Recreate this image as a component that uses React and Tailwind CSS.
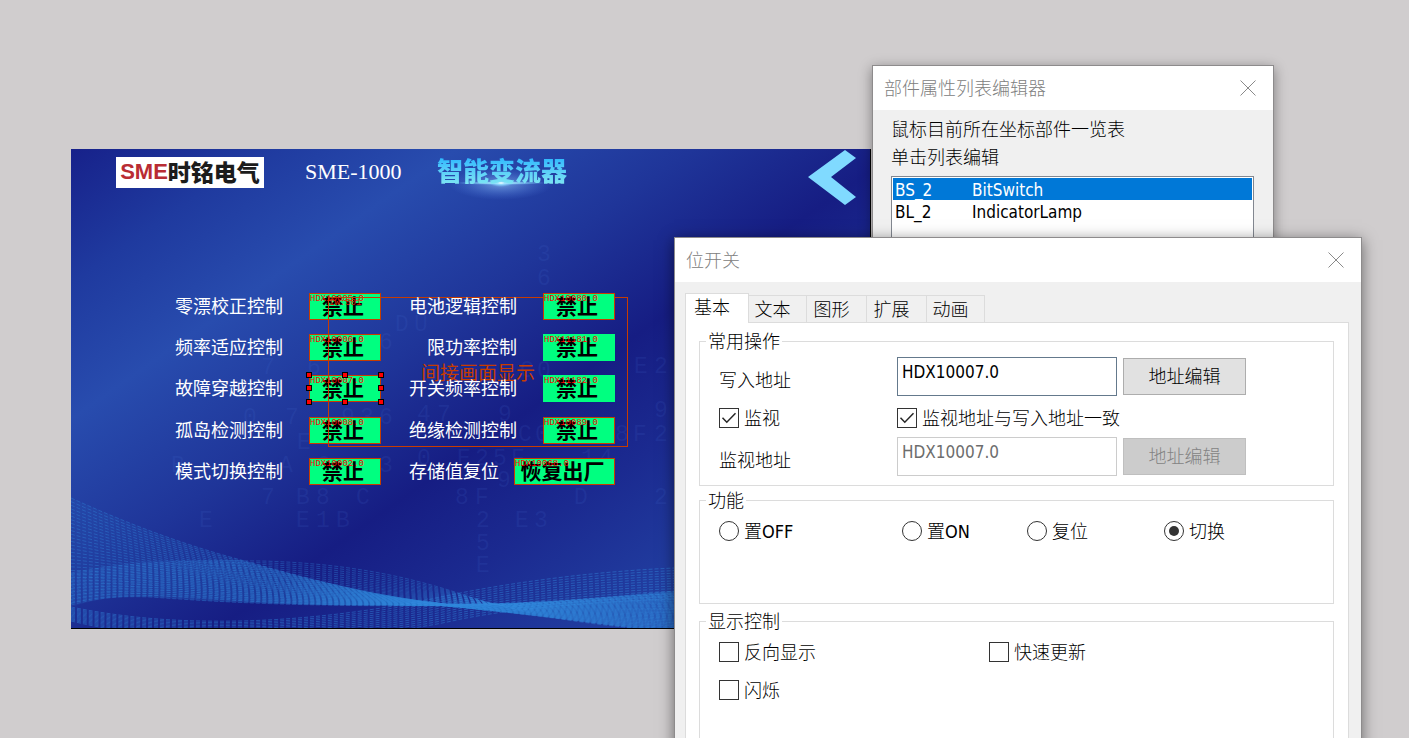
import React from 'react';

const CJK = "font-['DejaVu_Sans_Condensed','Noto_Sans_CJK_SC',sans-serif]";

/* ---------- background artwork of the HMI screen ---------- */

const mix = (a, b, t) => a.map((v, i) => v + (b[i] - v) * t);

// Each curve: start point followed by cubic control triples.
const BANDS = [
  {
    n: 30,
    color: '#2f82d8',
    top: [0, 349, 55, 374, 110, 395, 170, 411, 230, 428, 270, 438, 310, 446, 340, 451, 355, 453, 376, 455, 440, 456, 520, 450, 604, 442, 680, 434, 740, 430, 800, 428],
    bottom: [0, 454, 40, 444, 100, 446, 150, 450, 210, 455, 260, 456, 310, 456, 340, 456, 355, 456, 376, 457, 440, 463, 520, 474, 604, 484, 680, 490, 740, 490, 800, 488],
    opacity: 0.42,
  },
  {
    n: 24,
    color: '#3388dc',
    top: [0, 424, 50, 414, 110, 411, 190, 412, 270, 414, 330, 426, 384, 443, 440, 462, 500, 476, 604, 482, 680, 486, 740, 488, 800, 490],
    bottom: [0, 456, 30, 448, 50, 447, 80, 448, 160, 454, 230, 457, 370, 457, 450, 456, 540, 450, 604, 444, 680, 438, 740, 434, 800, 430],
    opacity: 0.36,
  },
  {
    n: 13,
    color: '#3590e2',
    top: [0, 458, 60, 470, 110, 473, 170, 472, 250, 470, 320, 459, 384, 445, 450, 432, 530, 422, 604, 419, 680, 418, 740, 420, 800, 424],
    bottom: [0, 472, 60, 486, 110, 490, 170, 490, 250, 490, 330, 484, 390, 470, 450, 458, 540, 452, 604, 450, 680, 450, 740, 454, 800, 458],
    opacity: 0.42,
  },
];

const toPath = (p) => {
  const r = p.map((v) => v.toFixed(1));
  let d = `M${r[0]} ${r[1]}`;
  for (let i = 2; i < r.length; i += 6) d += ` C${r.slice(i, i + 6).join(' ')}`;
  return d;
};

const GLYPHS = [
  ['0', 172, 275], ['7', 214, 275], ['9', 270, 275], ['3', 289, 275], ['6', 308, 275],
  ['E', 226, 300], ['B', 100, 323], ['A', 208, 323], ['2', 246, 323], ['3', 308, 323],
  ['6', 308, 200], ['6', 236, 225], ['7', 190, 225], ['D', 324, 182], ['U', 343, 182],
  ['7', 190, 355], ['B', 225, 355], ['8', 245, 355], ['C', 285, 355], ['8', 384, 355], ['F', 404, 355],
  ['E', 128, 378], ['E', 225, 378], ['1', 245, 378], ['B', 265, 378], ['2', 405, 378], ['E', 444, 378], ['3', 463, 378],
  ['5', 405, 401], ['E', 405, 423], ['D', 503, 355], ['2', 583, 355],
  ['C', 449, 228], ['0', 466, 228], ['E', 563, 224], ['2', 583, 224], ['4', 346, 272], ['7', 366, 272], ['9', 427, 272], ['9', 583, 268],
  ['C', 447, 292], ['0', 464, 292], ['8', 544, 292], ['F', 562, 292], ['2', 583, 292],
  ['0', 346, 316], ['E', 386, 316], ['2', 404, 316], ['5', 422, 316], ['F', 440, 316], ['1', 510, 316], ['4', 528, 316],
  ['9', 426, 338], ['3', 466, 112], ['6', 466, 136],
];

function ScreenArt() {
  return (
    <svg className="absolute inset-0 h-full w-full" viewBox="0 0 799 479" aria-hidden="true">
      <defs>
        <radialGradient id="glow">
          <stop offset="0" stopColor="#9fd4ff" stopOpacity="0.6" />
          <stop offset="1" stopColor="#5b8cf0" stopOpacity="0" />
        </radialGradient>
        <radialGradient id="flare">
          <stop offset="0" stopColor="#ffffff" />
          <stop offset="0.3" stopColor="#9fe4ff" stopOpacity="0.9" />
          <stop offset="1" stopColor="#6fc8ff" stopOpacity="0" />
        </radialGradient>
        <linearGradient id="ribbon" gradientUnits="userSpaceOnUse" x1="0" y1="0" x2="610" y2="0">
          <stop offset="0" stopColor="#2f86dc" stopOpacity="0.1" />
          <stop offset="0.35" stopColor="#2f90e0" stopOpacity="0.28" />
          <stop offset="0.62" stopColor="#28a4ea" stopOpacity="0.75" />
          <stop offset="0.8" stopColor="#2f9be6" stopOpacity="0.45" />
          <stop offset="1" stopColor="#2f8ee0" stopOpacity="0.3" />
        </linearGradient>
      </defs>
      <g fill="#4a74d8" fillOpacity="0.13" fontFamily="Liberation Mono, monospace" fontSize="23">
        {GLYPHS.map(([c, x, y]) => (
          <text key={`${x}-${y}`} x={x} y={y}>{c}</text>
        ))}
      </g>
      <path
        d="M0 426 C60 408 110 411 170 411 C250 434 310 447 376 455 C440 456 520 450 604 442 L800 428 L800 488 L604 484 C520 474 440 463 370 457 C230 457 160 454 80 448 C50 447 30 448 0 458 Z"
        fill="url(#ribbon)"
      />
      <path d="M0 349 C55 374 110 395 170 411 C130 410 60 408 0 426 Z" fill="#2f86dc" fillOpacity="0.1" />
      {BANDS.map((b, k) => (
        <g key={k} fill="none" stroke={b.color} strokeOpacity={b.opacity} strokeWidth="1" strokeDasharray="4 2">
          {Array.from({ length: b.n }, (_, i) => (
            <path key={i} d={toPath(mix(b.top, b.bottom, i / (b.n - 1)))} />
          ))}
        </g>
      ))}
      <ellipse cx="430" cy="35" rx="52" ry="16" fill="url(#glow)" />
      <polygon points="737,28 774,1 785,9 760,28 785,48 774,56" fill="#80daff" />
      <ellipse cx="430" cy="34" rx="46" ry="2" fill="url(#flare)" />
      <ellipse cx="430" cy="34" rx="12" ry="4" fill="url(#flare)" />
    </svg>
  );
}

/* ---------- HMI screen items ---------- */

const LABELS = [
  ['零漂校正控制', 'left-[104px] top-[144px]'],
  ['频率适应控制', 'left-[104px] top-[185px]'],
  ['故障穿越控制', 'left-[104px] top-[226px]'],
  ['孤岛检测控制', 'left-[104px] top-[268px]'],
  ['模式切换控制', 'left-[104px] top-[309px]'],
  ['电池逻辑控制', 'left-[338px] top-[144px]'],
  ['限功率控制', 'left-[356px] top-[185px]'],
  ['开关频率控制', 'left-[338px] top-[226px]'],
  ['绝缘检测控制', 'left-[338px] top-[268px]'],
  ['存储值复位', 'left-[338px] top-[309px]'],
];

const LEFT_SWITCHES = [
  ['HDX10005.0', 'left-[238px] top-[144px]'],
  ['HDX10006.0', 'left-[238px] top-[185px]'],
  ['HDX10007.0', 'left-[238px] top-[226px]'],
  ['HDX10008.0', 'left-[238px] top-[268px]'],
  ['HDX10002.0', 'left-[238px] top-[309px]'],
];

const RIGHT_SWITCHES = [
  ['HDX10080.0', 'left-[472px] top-[144px] border-[#c83c00]', '禁止'],
  ['HDX11181.0', 'left-[472px] top-[185px] border-[#00ff80]', '禁止'],
  ['HDX11182.0', 'left-[472px] top-[226px] border-[#00ff80]', '禁止'],
  ['HDX10089.0', 'left-[472px] top-[268px] border-[#c83c00]', '禁止'],
];

const HANDLES = [
  'left-[235px] top-[223px]', 'left-[271px] top-[223px]', 'left-[307px] top-[223px]',
  'left-[235px] top-[236px]', 'left-[307px] top-[236px]',
  'left-[235px] top-[250px]', 'left-[271px] top-[250px]', 'left-[307px] top-[250px]',
];

function Switch({ address, text = '禁止', place, width = 'w-[72px]' }) {
  return (
    <button type="button" className={`absolute h-[27px] border bg-[#00ff80] ${width} ${place}`}>
      <span className="flex h-full items-center justify-center pr-1 pb-[2px] font-['Noto_Sans_CJK_SC',sans-serif] text-[21px] leading-none font-bold whitespace-nowrap text-black">
        {text}
      </span>
      <span className="absolute top-0 left-0 font-['Liberation_Mono',monospace] text-[9px] leading-[10px] text-[#ff0000]">
        {address}
      </span>
    </button>
  );
}

function HmiScreen() {
  return (
    <section className="absolute top-[149px] left-[71px] h-[480px] w-[800px] overflow-hidden border-r border-b border-black bg-[linear-gradient(145deg,#17218a_0%,#1f3a9f_13%,#284cae_26%,#1f3599_42%,#161d83_56%,#1b2a90_68%,#2240a2_84%,#24479f_100%)]">
      <ScreenArt />

      <div className="absolute top-[8px] left-[45px] flex h-[31px] w-[148px] items-center justify-center bg-white pb-[2px] leading-none whitespace-nowrap">
        <span className="font-['Liberation_Sans',sans-serif] text-[22px] font-bold text-[#b92c33]">SME</span>
        <span className="font-['Noto_Sans_CJK_SC',sans-serif] text-[23px] font-black text-[#1c1c1c]">时铭电气</span>
      </div>
      <span className="absolute top-[11px] left-[234px] font-['Liberation_Serif',serif] text-[22px] leading-[24px] whitespace-nowrap text-white">SME-1000</span>
      <h1 className="absolute top-[6px] left-[366px] bg-linear-to-b from-[#1fb4ff] to-[#7fe6f2] bg-clip-text font-['Noto_Sans_CJK_SC',sans-serif] text-[26px] leading-[30px] font-black whitespace-nowrap text-transparent">
        智能变流器
      </h1>

      {LEFT_SWITCHES.map(([address, place]) => (
        <Switch key={address} address={address} place={`border-[#c83c00] ${place}`} />
      ))}

      <div className="absolute top-[148px] left-[257px] flex h-[150px] w-[300px] items-center justify-center border border-[#c83c00]">
        <span className="absolute top-0 left-0 font-['Liberation_Mono',monospace] text-[9px] leading-[10px] text-[#e01800]">IW:501</span>
        <span className="font-['Noto_Sans_CJK_SC',sans-serif] text-[19px] leading-[20px] text-[#c83c00]">间接画面显示</span>
      </div>

      {RIGHT_SWITCHES.map(([address, place, text]) => (
        <Switch key={address} address={address} place={place} text={text} />
      ))}
      <Switch address="HDX10068.0" text="恢复出厂" place="left-[443px] top-[309px] border-[#c83c00]" width="w-[101px]" />

      {LABELS.map(([text, place]) => (
        <span key={text} className={`absolute font-['Noto_Sans_CJK_SC',sans-serif] text-[18px] leading-[24px] whitespace-nowrap text-white ${place}`}>
          {text}
        </span>
      ))}

      {HANDLES.map((place) => (
        <i key={place} className={`absolute size-[6px] border border-black bg-[#ff0000] ${place}`} />
      ))}
    </section>
  );
}

/* ---------- dialogs ---------- */

function TitleBar({ title }) {
  return (
    <header className="flex h-11 items-center justify-between bg-white pr-[17px] pb-[2px] pl-[11px]">
      <h2 className="font-['Noto_Sans_CJK_SC',sans-serif] text-[18px] leading-[24px] font-light text-[#808080]">{title}</h2>
      <button type="button" aria-label="关闭" className="pt-[2px] text-[#8a8a8a]">
        <svg className="block size-4" viewBox="0 0 16 16" fill="none" stroke="currentColor" strokeWidth="1">
          <path d="M0.5 0.5 L15.5 15.5 M15.5 0.5 L0.5 15.5" />
        </svg>
      </button>
    </header>
  );
}

const PARTS = [
  ['BS_2', 'BitSwitch'],
  ['BL_2', 'IndicatorLamp'],
];

function PartListDialog() {
  return (
    <section className={`absolute top-[65px] left-[872px] w-[402px] border border-[#8d8b8c] bg-[#f0f0f0] shadow-[0_3px_12px_rgba(0,0,0,0.4)] ${CJK}`}>
      <TitleBar title="部件属性列表编辑器" />
      <div className="pt-[6px] pr-[19px] pb-5 pl-[18px] text-[18px] leading-[28px] font-light">
        <p>鼠标目前所在坐标部件一览表</p>
        <p>单击列表编辑</p>
        <ul role="listbox" aria-label="部件" className="mt-1 h-[200px] border border-[#828790] bg-white p-px text-[17px] leading-[24px] font-normal">
          {PARTS.map(([id, name], i) => (
            <li
              key={id}
              role="option"
              aria-selected={i === 0}
              className={i === 0 ? 'flex h-[22px] bg-[#0078d7] pl-[2px] text-white' : 'flex h-[22px] pl-[2px] text-black'}
            >
              <span className="w-[77px]">{id}</span>
              <span>{name}</span>
            </li>
          ))}
        </ul>
      </div>
    </section>
  );
}

function Check({ label, checked = false }) {
  return (
    <label className="flex h-[24px] items-center gap-[5px]">
      <span className="grid size-5">
        <input type="checkbox" defaultChecked={checked} className="peer col-start-1 row-start-1 size-5 appearance-none border border-[#333333] bg-white" />
        <svg className="pointer-events-none invisible col-start-1 row-start-1 size-5 peer-checked:visible" viewBox="0 0 20 20" fill="none" stroke="#262626" strokeWidth="1.5">
          <path d="M3.5 9.8 L7.8 14.2 L16.5 5.2" />
        </svg>
      </span>
      <span className="pt-[2px]">{label}</span>
    </label>
  );
}

function Radio({ label, checked = false, width }) {
  return (
    <label className={`flex h-[24px] items-center gap-[5px] ${width}`}>
      <span className="grid size-5 place-items-center">
        <input type="radio" name="function" defaultChecked={checked} className="peer col-start-1 row-start-1 size-5 appearance-none rounded-full border border-[#333333] bg-white" />
        <span className="pointer-events-none invisible col-start-1 row-start-1 size-[10px] rounded-full bg-[#333333] peer-checked:visible" />
      </span>
      <span className="pt-[2px]">{label}</span>
    </label>
  );
}

function Group({ title, className, children }) {
  return (
    <fieldset className={`border border-[#dcdcdc] pl-[19px] ${className}`}>
      <legend className="-ml-[13px] h-5 px-[2px] leading-[22px]">{title}</legend>
      {children}
    </fieldset>
  );
}

const TABS = [
  ['文本', 'w-[58px]'],
  ['图形', 'w-[60px]'],
  ['扩展', 'w-[60px]'],
  ['动画', 'w-[58px]'],
];

function BitSwitchDialog() {
  return (
    <section className={`absolute top-[237px] left-[674px] w-[688px] border border-[#8d8b8c] bg-[#f0f0f0] shadow-[0_3px_14px_rgba(0,0,0,0.5)] ${CJK}`}>
      <TitleBar title="位开关" />
      <div className="pt-[11px] pr-3 pb-3 pl-[10px] text-[18px] leading-[24px] font-light text-black">
        <div role="tablist" className="flex items-end">
          <button type="button" role="tab" aria-selected="true" className="relative z-10 -mb-px h-[30px] w-16 border border-b-0 border-[#dcdcdc] bg-white pr-[10px] pb-[2px]">
            基本
          </button>
          {TABS.map(([name, width]) => (
            <button key={name} type="button" role="tab" aria-selected="false" className={`h-[27px] border-t border-r border-[#dcdcdc] pt-px pr-[10px] ${width}`}>
              {name}
            </button>
          ))}
        </div>
        <div role="tabpanel" className="flex flex-col border border-[#dcdcdc] bg-white pt-[8px] pr-[14px] pb-4 pl-[13px]">
          <Group title="常用操作" className="h-[155px]">
            <div className="grid grid-cols-[178px_220px_123px] grid-rows-[39px_41px_39px] items-center pt-[6px]">
              <label htmlFor="write-address" className="pt-[8px]">写入地址</label>
              <input id="write-address" defaultValue="HDX10007.0" className="h-[39px] w-full border border-[#64798c] bg-white px-1 pb-[9px] text-[17px] font-normal" />
              <button type="button" className="ml-[6px] h-[37px] w-[123px] border border-[#adadad] bg-[#e1e1e1]">地址编辑</button>

              <div className="pt-[2px]">
                <Check label="监视" checked />
              </div>
              <div className="col-span-2 pt-[2px]">
                <Check label="监视地址与写入地址一致" checked />
              </div>

              <label htmlFor="watch-address" className="pt-[8px]">监视地址</label>
              <input id="watch-address" disabled defaultValue="HDX10007.0" className="h-[39px] w-full border border-[#cccccc] bg-white px-1 pb-[9px] text-[17px] font-normal text-[#6d6d6d]" />
              <button type="button" disabled className="ml-[6px] h-[37px] w-[123px] border border-[#bfbfbf] bg-[#cccccc] text-[#838383]">地址编辑</button>
            </div>
          </Group>

          <Group title="功能" className="mt-1 h-[114px]">
            <div className="flex pt-[9px]">
              <Radio label="置OFF" width="w-[183px]" />
              <Radio label="置ON" width="w-[125px]" />
              <Radio label="复位" width="w-[137px]" />
              <Radio label="切换" width="w-[100px]" checked />
            </div>
          </Group>

          <Group title="显示控制" className="mt-[7px] h-[180px]">
            <div className="grid grid-cols-[270px_1fr] gap-y-[14px] pt-[9px]">
              <Check label="反向显示" />
              <Check label="快速更新" />
              <Check label="闪烁" />
            </div>
          </Group>
        </div>
      </div>
    </section>
  );
}

export default function App() {
  return (
    <main className="relative h-screen overflow-hidden bg-[#d0cdce]">
      <HmiScreen />
      <PartListDialog />
      <BitSwitchDialog />
    </main>
  );
}
